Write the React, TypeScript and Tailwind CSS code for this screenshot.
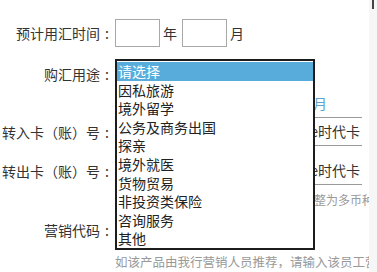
import React from "react";

const options = [
  "请选择",
  "因私旅游",
  "境外留学",
  "公务及商务出国",
  "探亲",
  "境外就医",
  "货物贸易",
  "非投资类保险",
  "咨询服务",
  "其他",
];

const Label = ({ text }: { text: string }) => (
  <div className="flex justify-end w-[114px] shrink-0 text-[14px] leading-[20px] whitespace-nowrap">
    <span>{text}</span>
    <span className="w-[14px] text-center">:</span>
  </div>
);

export default function App() {
  return (
    <div className="relative flex w-[377px] h-[272px] overflow-hidden bg-white text-[#333] font-['Noto_Sans_CJK_SC','Noto_Sans',sans-serif]">
      {/* form */}
      <div className="flex flex-col w-[369px] shrink-0 pt-[19px]">
        <div className="flex items-center h-[28px]">
          <Label text="预计用汇时间" />
          <div className="ml-[1px] w-[45px] h-[28px] border border-[#a8a8a8]" />
          <span className="ml-[3px] mr-[5px] text-[14px]">年</span>
          <div className="w-[45px] h-[28px] border border-[#a8a8a8]" />
          <span className="ml-[3px] text-[14px]">月</span>
        </div>

        <div className="flex items-center mt-[12px] h-[30px]">
          <Label text="购汇用途" />
        </div>

        <div className="flex items-center mt-[5px] h-[18px]">
          <div className="w-[313px] shrink-0" />
          <span className="text-[14px] leading-[18px] text-[#5aa3d2]">月</span>
        </div>

        <div className="flex items-center mt-[5px] h-[29px]">
          <Label text="转入卡（账）号" />
          <div className="ml-[2px] flex items-center justify-end w-[246px] h-[29px] border-y border-[#9a9a9a] pr-[2px] text-[14px] whitespace-nowrap">
            e时代卡
          </div>
        </div>

        <div className="flex items-center mt-[10px] h-[29px]">
          <Label text="转出卡（账）号" />
          <div className="ml-[2px] flex items-center justify-end w-[246px] h-[29px] border-b border-[#9a9a9a] pr-[2px] text-[14px] whitespace-nowrap">
            e时代卡
          </div>
        </div>

        <div className="flex items-center mt-[7px] h-[16px]">
          <div className="w-[314px] shrink-0" />
          <span className="text-[12px] leading-[16px] text-[#999] whitespace-nowrap">整为多币种</span>
        </div>

        <div className="flex items-center mt-[10px] h-[24px]">
          <Label text="营销代码" />
        </div>

        <div className="mt-[12px] h-[16px] pl-[115px] text-[12.5px] leading-[16px] text-[#999] whitespace-nowrap">
          如该产品由我行营销人员推荐，请输入该员工营
        </div>
      </div>

      {/* right gutter */}
      <div className="relative w-[8px] shrink-0 bg-[#f6f6f6]">
        <div className="absolute left-[3px] top-0 w-[2px] h-[9px] bg-[#444]" />
      </div>

      {/* open select list */}
      <div className="absolute left-[115px] top-[59px] w-[200px] h-[191px] border-2 border-[#1c1c1c] bg-white pt-[1px]">
        {options.map((o, i) => (
          <div
            key={o}
            className={`h-[18.6px] pl-[1px] text-[14px] leading-[18.6px] whitespace-nowrap ${
              i === 0 ? "bg-[#58acdc] text-white" : "text-[#222]"
            }`}
          >
            {o}
          </div>
        ))}
      </div>
    </div>
  );
}
